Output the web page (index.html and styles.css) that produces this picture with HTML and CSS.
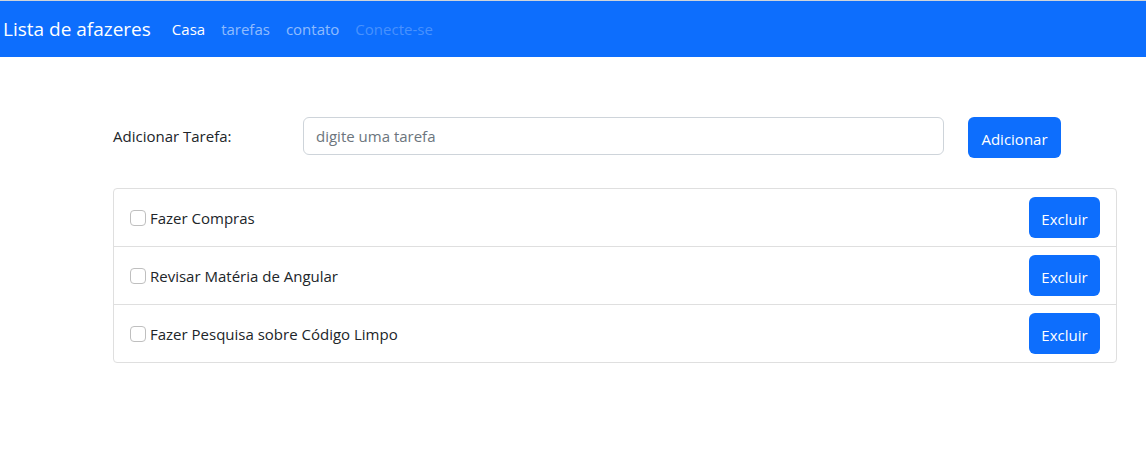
FILE: index.html
```html
<!DOCTYPE html>
<html lang="pt-BR">
<head>
  <meta charset="utf-8">
  <meta name="viewport" content="width=device-width, initial-scale=1">
  <title>Lista de afazeres</title>
  <link rel="stylesheet" href="styles.css">
</head>
<body>
  <nav class="navbar">
    <a class="brand" href="#">Lista de afazeres</a>
    <ul class="nav-list">
      <li><a class="nav-link active" href="#" aria-current="page">Casa</a></li>
      <li><a class="nav-link" href="#">tarefas</a></li>
      <li><a class="nav-link" href="#">contato</a></li>
      <li><a class="nav-link disabled" href="#" aria-disabled="true">Conecte-se</a></li>
    </ul>
  </nav>
  <main class="content">
    <form class="task-form">
      <label class="form-label" for="task">Adicionar Tarefa:</label>
      <input class="form-control" id="task" type="text" placeholder="digite uma tarefa">
      <button class="btn btn-add" type="button">Adicionar</button>
    </form>
    <ul class="task-list">
      <li class="task">
        <input class="check" type="checkbox" id="task-1">
        <label class="task-name" for="task-1">Fazer Compras</label>
        <button class="btn btn-delete" type="button">Excluir</button>
      </li>
      <li class="task">
        <input class="check" type="checkbox" id="task-2">
        <label class="task-name" for="task-2">Revisar Matéria de Angular</label>
        <button class="btn btn-delete" type="button">Excluir</button>
      </li>
      <li class="task">
        <input class="check" type="checkbox" id="task-3">
        <label class="task-name" for="task-3">Fazer Pesquisa sobre Código Limpo</label>
        <button class="btn btn-delete" type="button">Excluir</button>
      </li>
    </ul>
  </main>
</body>
</html>
```
FILE: styles.css
```css
* {
  box-sizing: border-box;
}

body {
  margin: 0;
  background: #fff;
  color: #212529;
  font: 15px/24px "Segoe UI", "Open Sans", "Noto Sans", sans-serif;
}

.navbar {
  display: flex;
  align-items: center;
  gap: 13px;
  padding: 8px 3px;
  border-top: 1px solid #ced4da;
  background: #0d6efd;
}

.brand {
  color: #fff;
  font-size: 19px;
  line-height: 30px;
  text-decoration: none;
}

.nav-list {
  display: flex;
  margin: 0;
  padding: 0;
  list-style: none;
}

.nav-link {
  display: block;
  padding: 8px;
  color: rgba(255, 255, 255, 0.55);
  text-decoration: none;
}

.nav-link.active {
  color: #fff;
}

.nav-link.disabled {
  color: rgba(255, 255, 255, 0.25);
}

.content {
  padding: 60px 29px 60px 113px;
}

.task-form {
  display: grid;
  grid-template-columns: 166px 1fr 149px;
  column-gap: 24px;
  align-items: start;
}

.form-label {
  padding: 7px 0;
}

.form-control {
  width: 100%;
  height: 38px;
  padding: 6px 12px;
  border: 1px solid #ced4da;
  border-radius: 6px;
  background: #fff;
  color: #212529;
  font: inherit;
}

.form-control::placeholder {
  color: #6c757d;
  opacity: 1;
}

.btn {
  padding: 10px 12px 7px;
  border: 0;
  border-radius: 6px;
  background: #0d6efd;
  color: #fff;
  font: inherit;
  cursor: pointer;
}

.btn-add {
  justify-self: start;
  min-width: 93px;
}

.btn-delete {
  min-width: 71px;
}

.task-list {
  margin: 30px 0 0;
  padding: 0;
  border: 1px solid #dfdfdf;
  border-radius: 4px;
  list-style: none;
}

.task {
  display: flex;
  align-items: center;
  padding: 8px 16px;
}

.task + .task {
  border-top: 1px solid #dfdfdf;
}

.check {
  appearance: none;
  width: 16px;
  height: 16px;
  margin: 0 4px 0 0;
  border: 1px solid #bfbfbf;
  border-radius: 4px;
  background: #fff;
}

.check:checked {
  border-color: #0d6efd;
  background: #0d6efd;
}

.task-name {
  flex: 1;
}
```
